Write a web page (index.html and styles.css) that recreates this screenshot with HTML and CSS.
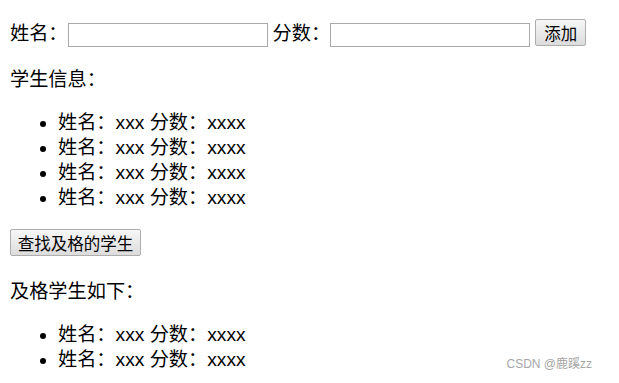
FILE: index.html
```html
<html>
<head>
  <title>学生成绩</title>
  <link rel="stylesheet" href="styles.css">
</head>
<body>
  <div class="form">
    <span class="label">姓名：</span>
    <input type="text" class="field" id="name">
    <span class="label gap">分数：</span>
    <input type="text" class="field" id="score">
    <button class="btn add gap">添加</button>
  </div>
  <p class="title">学生信息：</p>
  <ul class="list">
    <li>姓名：xxx 分数：xxxx</li>
    <li>姓名：xxx 分数：xxxx</li>
    <li>姓名：xxx 分数：xxxx</li>
    <li>姓名：xxx 分数：xxxx</li>
  </ul>
  <button class="btn find">查找及格的学生</button>
  <p class="title second">及格学生如下：</p>
  <ul class="list">
    <li>姓名：xxx 分数：xxxx</li>
    <li>姓名：xxx 分数：xxxx</li>
  </ul>
  <div class="mark">CSDN @鹿蹊zz</div>
</body>
</html>
```
FILE: styles.css
```css
body {
  margin: 0;
  padding: 10px;
  font-family: "Liberation Sans", "Noto Sans CJK SC", sans-serif;
  font-size: 19.2px;
  line-height: 25px;
  color: #000;
  background: #fff;
}
.form {
  display: flex;
  align-items: flex-start;
  margin-top: 9px;
  height: 29px;
  white-space: nowrap;
}
.label {
  margin-top: 2px;
}
.gap {
  margin-left: 5px;
}
.field {
  width: 200px;
  height: 24px;
  margin-top: 4px;
  box-sizing: border-box;
  border: 1px solid #a9a9a9;
  padding: 0 2px;
  font-size: 16px;
}
.btn {
  font-family: "Noto Sans CJK SC", sans-serif;
  font-size: 16.5px;
  line-height: 20px;
  height: 27px;
  padding: 0 6px;
  border: 1px solid #adadad;
  border-radius: 2px;
  background: linear-gradient(#f7f7f7, #dcdcdc);
  color: #000;
}
.add {
  width: 51px;
}
.title {
  margin: 19px 0 18px;
}
.second {
  margin-top: 23px;
}
.list {
  margin: 0;
  padding-left: 48px;
}
.find {
  display: block;
  width: 131px;
  margin: 19px 0 0;
}
.mark {
  position: absolute;
  right: 27px;
  bottom: 6px;
  font-size: 12px;
  color: #a6a6a6;
  font-family: "Liberation Sans", "Noto Sans CJK SC", sans-serif;
}
```
